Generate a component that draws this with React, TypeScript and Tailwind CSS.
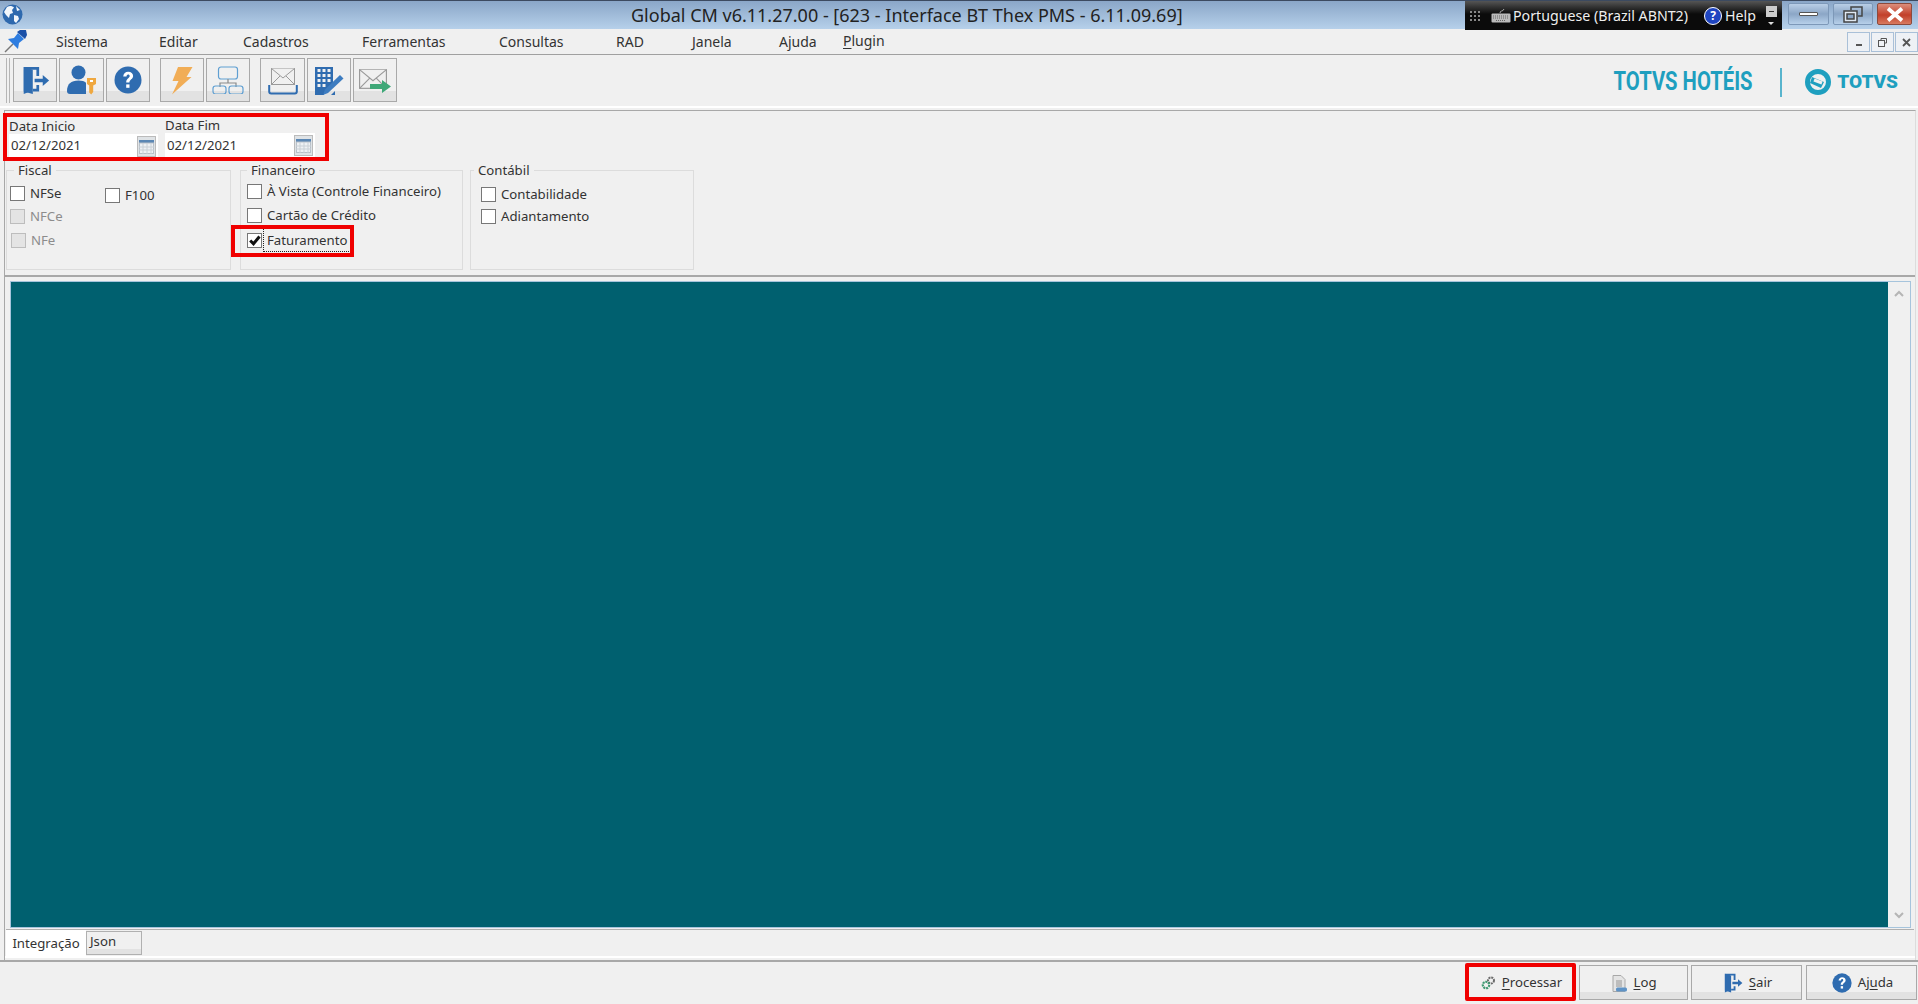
import type { ReactNode } from 'react'

const menus = [
  { label: 'Sistema', width: 'w-[103px]' },
  { label: 'Editar', width: 'w-[84px]' },
  { label: 'Cadastros', width: 'w-[119px]' },
  { label: 'Ferramentas', width: 'w-[137px]' },
  { label: 'Consultas', width: 'w-[117px]' },
  { label: 'RAD', width: 'w-[76px]' },
  { label: 'Janela', width: 'w-[87px]' },
  { label: 'Ajuda', width: 'w-[64px]' },
]

const blue = '#2f6cb0'

function ExitIcon({ size = 29 }: { size?: number }) {
  return (
    <svg width={size} height={size} viewBox="0 0 32 32">
      <path d="M3 1h17v10h-3V4H11l-1 0v24l-7 3z" fill={blue} />
      <path d="M3 1l10 3v27l-10-3z" fill={blue} />
      <path d="M20 21v7h-7v-3h4v-4z" fill={blue} />
      <path d="M15 14h9v-4l7 6-7 6v-4h-9z" fill={blue} />
    </svg>
  )
}

function HelpIcon({ size = 28 }: { size?: number }) {
  return (
    <svg width={size} height={size} viewBox="0 0 28 28">
      <circle cx="14" cy="14" r="13.5" fill={blue} />
      <path d="M9.2 10.6c.2-3 2.300-4.800 5-4.800 2.900 0 4.900 1.700 4.900 4.200 0 3.300-3.700 3.500-3.700 6.600h-3.200c0-4.200 3.500-4.300 3.500-6.500 0-1-.6-1.600-1.500-1.600-1 0-1.600.7-1.700 2.100z" fill="#fff" />
      <rect x="12.200" y="18.400" width="3.300" height="3.400" fill="#fff" />
    </svg>
  )
}

function UserKeyIcon() {
  return (
    <svg width="30" height="30" viewBox="0 0 30 30">
      <circle cx="11.500" cy="7.500" r="7" fill={blue} />
      <path d="M0 26c0-7 4-10.500 11.500-10.500 3.500 0 6 .8 7.500 2.200V29H3c-2 0-3-1-3-3z" fill={blue} />
      <path d="M20 13h9v6l-2.800 1.500V27l-2 2.500-2-2V20.500L20 19z" fill="#efa840" />
      <rect x="23" y="15" width="3" height="2" fill="#fff" />
    </svg>
  )
}

function BoltIcon() {
  return (
    <svg width="22" height="28" viewBox="0 0 22 28">
      <path d="M7 0h14.500l-6 10h5L1 27.500 7.500 14H1.500z" fill="#f1ad56" />
    </svg>
  )
}

function OrgIcon() {
  return (
    <svg width="32" height="28" viewBox="0 0 32 28" fill="none">
      <rect x="6.500" y="1" width="19" height="12" rx="2.500" stroke="#5f9fd2" strokeWidth="1.200" />
      <path d="M16 13v4M8 21v-4h16v4" stroke="#8a8a8a" strokeWidth="1.200" />
      <rect x="1" y="20" width="13" height="8" rx="2.500" stroke="#5f9fd2" strokeWidth="1.200" />
      <rect x="17" y="20" width="14" height="8" rx="2.500" stroke="#5f9fd2" strokeWidth="1.200" />
    </svg>
  )
}

function MailIcon({ width = 24, height = 17 }: { width?: number; height?: number }) {
  return (
    <svg width={width} height={height} viewBox="0 0 24 17" fill="#f0f0f0" stroke="#9a9a9a" strokeWidth="1">
      <rect x="0.500" y="0.500" width="23" height="16" />
      <path d="M.5.500L12 10 23.500.500M.5 16.500l8.500-8.500M23.500 16.500L15 8" />
    </svg>
  )
}

function InboxIcon() {
  return (
    <div className="flex flex-col items-center">
      <MailIcon />
      <svg width="30" height="10" viewBox="0 0 30 10" fill="none">
        <path d="M1.200 0v6.500c0 1.200.8 2 2 2h23.600c1.200 0 2-.8 2-2V0" stroke={blue} strokeWidth="2" />
      </svg>
    </div>
  )
}

function BuildingIcon() {
  return (
    <svg width="29" height="29" viewBox="0 0 29 29">
      <path d="M0 29V1h18v16L9 27v2z" fill={blue} />
      <g fill="#f0f0f0">
        <rect x="2.500" y="3" width="3" height="3" />
        <rect x="7.500" y="3" width="3" height="3" />
        <rect x="12.500" y="3" width="3" height="3" />
        <rect x="2.500" y="8" width="3" height="3" />
        <rect x="7.500" y="8" width="3" height="3" />
        <rect x="12.500" y="8" width="3" height="3" />
        <rect x="2.500" y="13" width="3" height="3" />
        <rect x="7.500" y="13" width="3" height="3" />
        <rect x="12.500" y="13" width="3" height="3" />
        <rect x="2.500" y="18" width="3" height="3" />
        <rect x="7.500" y="18" width="3" height="3" />
      </g>
      <path d="M25 9l3.500 3.500L13 27l-5 2 2-5.500z" fill="#3d7cc0" />
      <path d="M16 29l4-4v4z" fill={blue} />
    </svg>
  )
}

function MailArrowIcon() {
  return (
    <div className="relative h-[24px] w-[32px]">
      <MailIcon width={28} height={20} />
      <svg className="absolute bottom-0 right-0" width="21" height="13" viewBox="0 0 21 13">
        <path d="M0 4h12V0l9 6.500-9 6.500V9H0z" fill="#3fa878" />
      </svg>
    </div>
  )
}

function GearsIcon() {
  return (
    <svg width="15" height="14" viewBox="0 0 15 14">
      <circle cx="10" cy="4.500" r="3" fill="none" stroke="#6b6b6b" strokeWidth="2" strokeDasharray="2 .8" />
      <circle cx="5" cy="9" r="3.200" fill="none" stroke="#3f9a72" strokeWidth="2.200" strokeDasharray="2 .8" />
    </svg>
  )
}

function LogIcon() {
  return (
    <svg width="15" height="17" viewBox="0 0 15 17">
      <path d="M1 .5h8l4 4v12H1z" fill="#e4e4e4" stroke="#a8a8a8" />
      <rect x="4" y="5" width="6" height="7" fill="#bdbdbd" />
      <rect x="4" y="12.500" width="11" height="4" rx="1.500" fill="#5f93c6" />
    </svg>
  )
}

function CalendarButton() {
  return (
    <span className="flex h-[21px] w-[19px] items-center justify-center border border-[#bbb] bg-[#dfe3e6]">
      <svg width="15" height="14" viewBox="0 0 15 14">
        <rect x="0" y="0" width="15" height="3" fill="#5b87b4" />
        <rect x="0.500" y="3" width="14" height="10.500" fill="#eef1f4" stroke="#b8c0c8" />
        <path d="M0 7h15M0 10h15M4 3v11M8 3v11M12 3v11" stroke="#c9d0d6" />
      </svg>
    </span>
  )
}

function ToolButton({ children, className = '' }: { children: ReactNode; className?: string }) {
  return (
    <div
      className={`flex h-[44px] w-[44px] shrink-0 justify-center border border-[#a9a9a9] bg-[linear-gradient(#f0f0f0_77%,#e2e2e2_77%)] pt-[6px] ${className}`}
    >
      {children}
    </div>
  )
}

function BottomButton({
  icon,
  mnemonic,
  before = '',
  after,
  className = '',
}: {
  icon: ReactNode
  mnemonic: string
  before?: string
  after: string
  className?: string
}) {
  return (
    <button
      className={`flex shrink-0 items-center justify-center gap-[6px] border pl-[2px] pt-[1px] text-[13.2px] text-[#333] ${className}`}
    >
      {icon}
      <span>
        {before}
        <span className="underline underline-offset-2">{mnemonic}</span>
        {after}
      </span>
    </button>
  )
}

const plainButton = 'h-[35px] border-[#a9a9a9] bg-[linear-gradient(#f0f0f0_78%,#e2e2e2_78%)]'

function CheckRow({
  label,
  checked = false,
  disabled = false,
  focused = false,
  className = '',
}: {
  label: string
  checked?: boolean
  disabled?: boolean
  focused?: boolean
  className?: string
}) {
  return (
    <div className={`flex h-[16px] items-center ${className}`}>
      <span
        className={`flex h-[15px] w-[15px] shrink-0 items-center justify-center border ${
          disabled ? 'border-[#bdbdbd] bg-[#e4e4e4]' : 'border-[#777] bg-white'
        }`}
      >
        {checked && (
          <svg width="12" height="11" viewBox="0 0 12 11">
            <path d="M1.200 5.500l3.300 3.300 6-7.300" fill="none" stroke="#111" strokeWidth="3" />
          </svg>
        )}
      </span>
      <span
        className={`ml-[5px] whitespace-nowrap text-[13.2px] leading-[16px] ${
          disabled ? 'text-[#8c8c8c]' : 'text-[#333]'
        } ${focused ? 'outline-1 outline-dotted outline-[#222] outline-offset-[3px]' : ''}`}
      >
        {label}
      </span>
    </div>
  )
}

function GroupBox({
  title,
  className = '',
  legendClass = '',
  children,
}: {
  title: string
  className?: string
  legendClass?: string
  children: ReactNode
}) {
  return (
    <fieldset className={`h-[108px] shrink-0 border border-[#dcdcdc] ${className}`}>
      <legend className={`px-[4px] text-[13.2px] leading-[16px] text-[#333] ${legendClass}`}>{title}</legend>
      {children}
    </fieldset>
  )
}

function DateField({
  label,
  className = '',
  valueClass = '',
}: {
  label: string
  className?: string
  valueClass?: string
}) {
  return (
    <div className={`shrink-0 ${className}`}>
      <div className="text-[13.2px] leading-[16px] text-[#333]">{label}</div>
      <div className="flex h-[25px] items-center justify-between bg-white px-[2px] text-[13.2px] text-[#333]">
        <span className={valueClass}>02/12/2021</span>
        <CalendarButton />
      </div>
    </div>
  )
}

export default function App() {
  return (
    <div className="flex h-screen w-full flex-col overflow-hidden bg-[#f0f0f0] font-['Noto_Sans',sans-serif]">
      {/* title bar */}
      <header className="flex h-[29px] shrink-0 items-start border-t border-[#3c4a60] bg-[linear-gradient(#8aa6c8,#b6d0ea)]">
        <svg className="ml-[2px] mt-[3px]" width="21" height="21" viewBox="0 0 21 21">
          <circle cx="10.500" cy="10.500" r="10" fill="#2e69ae" />
          <path d="M5 3c3-1.500 5-1 7 .5L10 6l1 3-3 1-1 4-3-3-2-3zM12 11l4 1 1 3-3 4-2-2zM14 2l4 4-3 1z" fill="#f2f6fb" />
        </svg>
        <div className="ml-[608px] mt-[2px] w-[560px] whitespace-nowrap text-[18px] leading-[24px] text-[#222]">
          Global CM v6.11.27.00 - [623 - Interface BT Thex PMS - 6.11.09.69]
        </div>
        <div className="ml-[274px] flex h-[29px] w-[317px] shrink-0 items-center bg-[linear-gradient(#555,#0b0b0b_45%,#0b0b0b)] pl-[5px] text-[14.2px] text-[#eee]">
          <span className="grid grid-cols-3 gap-[2px]">
            {Array.from({ length: 9 }).map((_, i) => (
              <span key={i} className="h-[2px] w-[2px] bg-[#888]" />
            ))}
          </span>
          <svg className="ml-[11px]" width="20" height="14" viewBox="0 0 20 14">
            <path d="M9 4C9 1 12 3 13 0" fill="none" stroke="#aaa" />
            <rect x="0.500" y="4.500" width="19" height="9" rx="1" fill="#bbb" />
            <path d="M2 7h16M2 9h16M5 11.500h10" stroke="#666" strokeDasharray="1 1" />
          </svg>
          <span className="ml-[2px] w-[191px] whitespace-nowrap">Portuguese (Brazil ABNT2)</span>
          <span className="flex h-[18px] w-[18px] items-center justify-center rounded-full border border-white bg-[#1f45c0] text-[12px] font-bold leading-none text-white">
            ?
          </span>
          <span className="ml-[3px]">Help</span>
          <span className="ml-[10px] flex flex-col items-center">
            <span className="flex h-[11px] w-[11px] items-center justify-center bg-[#ccc]">
              <span className="h-[1px] w-[5px] bg-[#333]" />
            </span>
            <span className="mt-[5px] h-0 w-0 border-x-[3px] border-t-[3px] border-x-transparent border-t-[#ddd]" />
          </span>
        </div>
        <div className="ml-[6px] flex gap-[4px] pt-[2px]">
          <div className="flex h-[22px] w-[41px] items-center justify-center rounded-[2px] border border-[#7d98b8] bg-[linear-gradient(#b9cee6,#8ba6c6_50%,#b7d0ea)]">
            <span className="h-[4px] w-[19px] rounded-[1px] border border-[#555] bg-white" />
          </div>
          <div className="flex h-[22px] w-[40px] items-center justify-center rounded-[2px] border border-[#7d98b8] bg-[linear-gradient(#b9cee6,#8ba6c6_50%,#b7d0ea)]">
            <svg width="20" height="17" viewBox="0 0 20 17" fill="none" stroke="#444" strokeWidth="1.500">
              <path d="M8 4V1h11v9h-4" />
              <rect x="1" y="5" width="13" height="11" fill="#dfe8f2" />
              <rect x="4" y="8" width="7" height="5" fill="#8ba6c6" />
            </svg>
          </div>
          <div className="flex h-[22px] w-[35px] items-center justify-center rounded-[2px] border border-[#8c4a3c] bg-[linear-gradient(#dd8e7c,#c2402a_55%,#d87a60)]">
            <svg width="18" height="15" viewBox="0 0 18 15">
              <path d="M2 1.500L16 13.500M16 1.500L2 13.500" stroke="#fff" strokeWidth="3.800" />
            </svg>
          </div>
        </div>
      </header>

      {/* menu bar */}
      <nav className="flex h-[26px] shrink-0 items-start border-b border-[#a0a0a0] text-[14px] text-[#333]">
        <svg className="ml-[4px] mt-[1px]" width="23" height="23" viewBox="0 0 23 23">
          <path d="M1 22l8-8" stroke="#777" strokeWidth="1.500" />
          <path d="M4 9l6-1 4-5 6 6-5 4-1 6z" fill="#2e7de0" />
          <path d="M13 2l3-2h6l1 5-2 4z" fill="#1a50a8" />
        </svg>
        <div className="ml-[29px] flex pt-[2px]">
          {menus.map((m) => (
            <span key={m.label} className={`${m.width} leading-[22px]`}>
              {m.label}
            </span>
          ))}
          <span className="-mt-[1px] leading-[22px]">
            <span className="underline underline-offset-2">P</span>lugin
          </span>
        </div>
        <div className="ml-auto flex gap-[1px] pt-[3px]">
          {['_', 'r', 'x'].map((k) => (
            <span
              key={k}
              className="flex h-[20px] w-[23px] items-center justify-center border border-[#a9c0d8] bg-[#eef1f5] text-[#555]"
            >
              {k === '_' && <span className="mt-[5px] h-[2px] w-[6px] bg-[#555]" />}
              {k === 'r' && (
                <svg width="9" height="9" viewBox="0 0 9 9" fill="none" stroke="#555">
                  <path d="M3 2V.5h5.500V5H6.500" />
                  <rect x="0.500" y="2.500" width="6" height="6" />
                </svg>
              )}
              {k === 'x' && (
                <svg width="9" height="9" viewBox="0 0 9 9">
                  <path d="M1 1l7 7M8 1L1 8" stroke="#555" strokeWidth="1.800" />
                </svg>
              )}
            </span>
          ))}
        </div>
      </nav>

      {/* toolbar */}
      <div className="flex h-[51px] shrink-0 items-start pt-[3px]">
        <div className="ml-[6px] mr-[3px] h-[45px] w-[4px] border-x border-[#b5b5b5]" />
        <ToolButton className="pt-[7px]"><ExitIcon /></ToolButton>
        <ToolButton className="ml-[2px] w-[45px]"><UserKeyIcon /></ToolButton>
        <ToolButton className="ml-[2px] pt-[7px]"><HelpIcon /></ToolButton>
        <ToolButton className="ml-[10px] pt-[8px]"><BoltIcon /></ToolButton>
        <ToolButton className="ml-[2px] pt-[7px]"><OrgIcon /></ToolButton>
        <ToolButton className="ml-[10px] w-[45px] pt-[9px]"><InboxIcon /></ToolButton>
        <ToolButton className="ml-[2px] pt-[7px]"><BuildingIcon /></ToolButton>
        <ToolButton className="ml-[2px] pt-[10px]"><MailArrowIcon /></ToolButton>

        <div className="ml-auto mr-[20px] flex items-center pt-[9px]">
          <span className="origin-right scale-x-[0.81] whitespace-nowrap font-['Roboto',sans-serif] text-[25px] font-bold leading-[30px] text-[#1e9fbf]">
            TOTVS HOTÉIS
          </span>
          <span className="ml-[28px] h-[29px] w-[2px] bg-[#58b4cd]" />
          <svg className="ml-[23px]" width="26" height="26" viewBox="0 0 26 26">
            <circle cx="13" cy="13" r="10.500" fill="none" stroke="#1e9fbf" strokeWidth="5" />
            <path d="M7 8l12 5-3 6-11-5z" fill="#1e9fbf" />
            <path d="M9 11l8 3" stroke="#f0f0f0" strokeWidth="3" />
          </svg>
          <span className="ml-[6px] font-['Roboto',sans-serif] text-[19px] font-black leading-[30px] text-[#1e9fbf]">
            TOTVS
          </span>
        </div>
      </div>
      <div className="h-[2px] shrink-0 bg-white" />

      {/* work area */}
      <main className="ml-[4px] mr-[2px] mt-[2px] flex h-[850px] shrink-0 flex-col border-l border-r border-t border-[#a8a8a8] border-r-[#dcdcdc]">
        <section className="relative h-[166px] shrink-0 border-b-2 border-[#a8a8a8]">
          <div className="flex pl-[4px] pt-[6px]">
            <DateField label="Data Inicio" className="mt-[1px] w-[149px]" valueClass="-mt-[1px]" />
            <DateField label="Data Fim" className="ml-[7px] w-[150px]" />
          </div>
          <div className="mt-[3px] flex pl-[1px]">
            <GroupBox title="Fiscal" className="w-[225px]" legendClass="ml-[7px]">
              <div className="flex pl-[3px] pt-[7px]">
                <CheckRow label="NFSe" className="w-[95px]" />
                <CheckRow label="F100" className="mt-[2px]" />
              </div>
              <CheckRow label="NFCe" disabled className="ml-[3px] mt-[5px]" />
              <CheckRow label="NFe" disabled className="ml-[4px] mt-[8px]" />
            </GroupBox>
            <GroupBox title="Financeiro" className="ml-[9px] w-[223px]" legendClass="ml-[6px]">
              <CheckRow label="À Vista (Controle Financeiro)" className="ml-[6px] mt-[5px]" />
              <CheckRow label="Cartão de Crédito" className="ml-[6px] mt-[8px]" />
              <CheckRow label="Faturamento" checked focused className="ml-[6px] mt-[9px]" />
            </GroupBox>
            <GroupBox title="Contábil" className="ml-[7px] w-[224px]" legendClass="ml-[3px]">
              <CheckRow label="Contabilidade" className="ml-[10px] mt-[8px]" />
              <CheckRow label="Adiantamento" className="ml-[10px] mt-[6px]" />
            </GroupBox>
          </div>
          {/* anotacoes em vermelho */}
          <div className="absolute left-[-2px] top-[2px] h-[48px] w-[326px] border-4 border-[#f00000]" />
          <div className="absolute left-[226px] top-[114px] h-[32px] w-[123px] border-4 border-[#f00000]" />
        </section>

        <div className="ml-[5px] mr-[4px] mt-[4px] flex h-[647px] shrink-0 border border-[#a6c4dc]">
          <div className="flex-1 bg-[#00606f]" />
          <div className="flex w-[22px] flex-col items-center justify-between bg-[#f0f0f0] py-[8px]">
            <svg width="10" height="7" viewBox="0 0 10 7">
              <path d="M1 6l4-4 4 4" fill="none" stroke="#b5b5b5" strokeWidth="2" />
            </svg>
            <svg width="10" height="7" viewBox="0 0 10 7">
              <path d="M1 1l4 4 4-4" fill="none" stroke="#b5b5b5" strokeWidth="2" />
            </svg>
          </div>
        </div>

        <div className="mx-[1px] mt-[1px] flex h-[27px] shrink-0 items-start border-t border-[#b0b0b0] text-[13.2px] text-[#333]">
          <div className="flex h-[26px] w-[80px] items-center justify-center bg-white pt-[2px]">Integração</div>
          <div className="mt-[1px] h-[24px] w-[56px] border border-[#b0b0b0] bg-[linear-gradient(#f0f0f0_78%,#e2e2e2_78%)] pl-[3px] leading-[18px]">
            Json
          </div>
        </div>
        <div className="h-[2px] shrink-0 bg-white" />
      </main>

      {/* bottom bar */}
      <footer className="flex flex-1 items-start justify-end border-t-2 border-[#a8a8a8] pr-[1px] pt-[3px]">
        <div className="mr-[3px] -mt-[2px] rounded-[2px] border-4 border-[#f00000]">
          <BottomButton
            icon={<GearsIcon />}
            mnemonic="P"
            after="rocessar"
            className="h-[30px] w-[103px] border-transparent bg-[#f0f0f0]"
          />
        </div>
        <BottomButton icon={<LogIcon />} mnemonic="L" after="og" className={`w-[109px] ${plainButton}`} />
        <BottomButton icon={<ExitIcon size={20} />} mnemonic="S" after="air" className={`ml-[3px] w-[111px] ${plainButton}`} />
        <BottomButton
          icon={<HelpIcon size={20} />}
          before="Aj"
          mnemonic="u"
          after="da"
          className={`ml-[4px] w-[111px] ${plainButton}`}
        />
      </footer>
    </div>
  )
}
